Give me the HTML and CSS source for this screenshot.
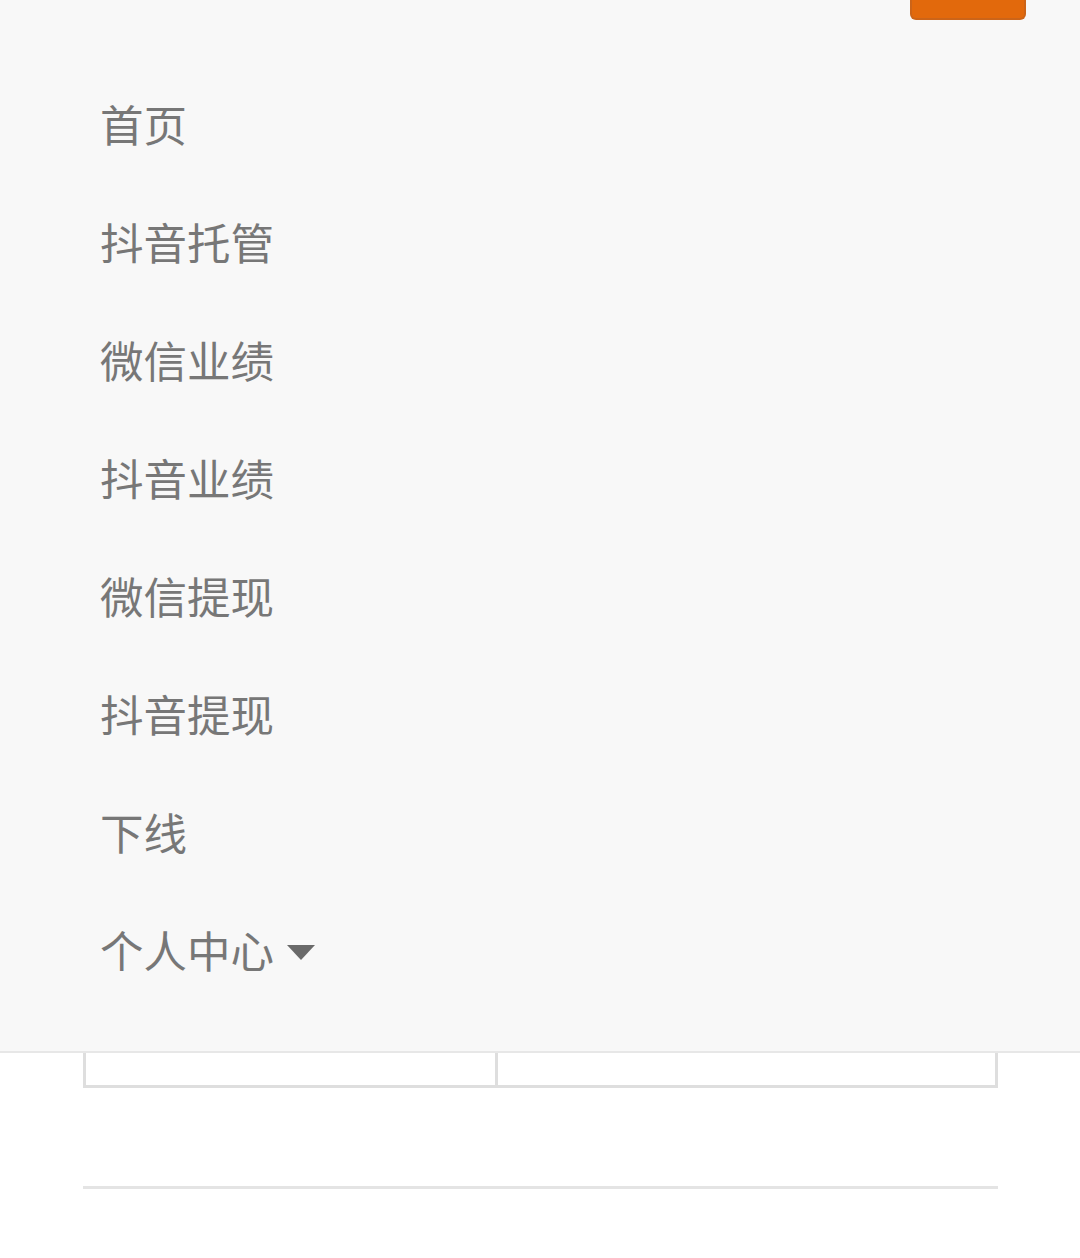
FILE: index.html
```html
<!DOCTYPE html>
<html lang="zh-CN">
<head>
<meta charset="utf-8">
<title>菜单</title>
<link rel="stylesheet" href="styles.css">
</head>
<body>
<nav class="navbar">
  <div class="navbar-top">
    <div class="toggle-btn"></div>
  </div>
  <ul class="menu">
    <li class="menu-item">首页</li>
    <li class="menu-item">抖音托管</li>
    <li class="menu-item">微信业绩</li>
    <li class="menu-item">抖音业绩</li>
    <li class="menu-item">微信提现</li>
    <li class="menu-item">抖音提现</li>
    <li class="menu-item">下线</li>
    <li class="menu-item">个人中心<span class="caret"></span></li>
  </ul>
</nav>
<div class="content">
  <div class="table-tail">
    <div class="cell cell-left"></div>
    <div class="cell cell-right"></div>
  </div>
  <div class="rule"></div>
</div>
</body>
</html>
```

FILE: styles.css
```css
html, body {
  margin: 0;
  padding: 0;
  background: #ffffff;
  font-family: "Noto Sans CJK SC", "Noto Sans", sans-serif;
}

.navbar {
  background: #f8f8f8;
  border-bottom: 2px solid #e7e7e7;
  height: 1051px;
  box-sizing: content-box;
}

.navbar-top {
  display: flex;
  justify-content: flex-end;
  padding-right: 54px;
}

.toggle-btn {
  width: 112px;
  height: 18px;
  background: #e2690c;
  border: 2px solid #cc6418;
  border-top: none;
  border-radius: 0 0 6px 6px;
}

.menu {
  list-style: none;
  margin: 0;
  padding: 45px 0 0 100px;
}

.menu-item {
  height: 118px;
  line-height: 118px;
  font-size: 43.5px;
  font-weight: 400;
  color: #777777;
  display: flex;
  align-items: center;
}

.caret {
  display: inline-block;
  width: 0;
  height: 0;
  margin-left: 13px;
  margin-top: 4px;
  border-left: 14px solid transparent;
  border-right: 14px solid transparent;
  border-top: 15px solid #6a6a6a;
}

.content {
  padding: 0 82px 0 83px;
}

.table-tail {
  display: flex;
  height: 32px;
  border: 3px solid #dedede;
  border-top: none;
}

.cell {
  height: 100%;
}

.cell-left {
  width: 409px;
  border-right: 3px solid #dedede;
}

.cell-right {
  flex: 1;
}

.rule {
  margin-top: 98px;
  height: 3px;
  background: #e4e4e4;
}
```
